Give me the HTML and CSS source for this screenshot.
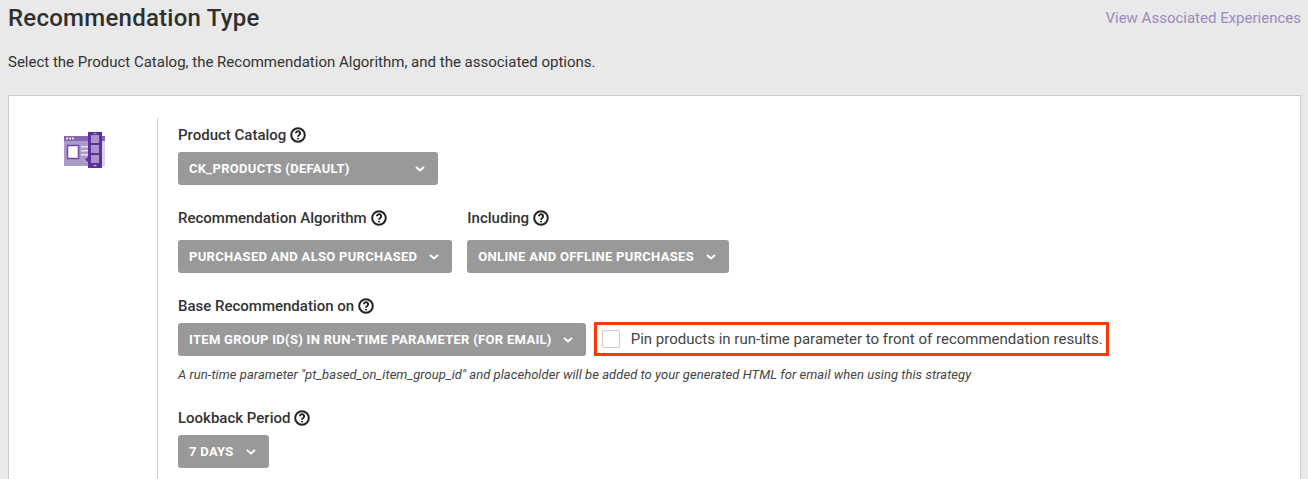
FILE: index.html
```html
<!DOCTYPE html>
<html>
<head>
  <title>Recommendation Type</title>
  <link rel="stylesheet" href="styles.css">
</head>
<body>
  <div class="header">
    <h1>Recommendation Type</h1>
    <a class="link" href="#">View Associated Experiences</a>
  </div>
  <p class="intro">Select the Product Catalog, the Recommendation Algorithm, and the associated options.</p>

  <div class="card">
    <div class="icon-col">
      <svg width="41" height="36" viewBox="0 0 41 36">
        <rect x="0" y="4" width="41" height="30" fill="#ab9bc9"/>
        <rect x="0" y="4" width="41" height="5" fill="#8568b2"/>
        <rect x="2" y="5.500" width="2" height="2" fill="#e6e0f0"/>
        <rect x="5" y="5.500" width="2" height="2" fill="#e6e0f0"/>
        <rect x="8" y="5.500" width="2" height="2" fill="#e6e0f0"/>
        <rect x="38" y="9" width="3" height="25" fill="#d9d2e8"/>
        <rect x="3.500" y="13.500" width="11" height="13" fill="#fff" stroke="#6f4aa5" stroke-width="1.500"/>
        <rect x="17" y="14" width="7" height="1.500" fill="#e6e0f0"/>
        <rect x="17" y="18" width="7" height="1.500" fill="#e6e0f0"/>
        <rect x="17" y="22" width="7" height="1.500" fill="#e6e0f0"/>
        <rect x="24" y="0" width="14" height="36" fill="#5f2f9e"/>
        <rect x="27" y="3" width="8" height="8" fill="#a795c7"/>
        <rect x="27" y="13" width="8" height="8" fill="#a795c7"/>
        <rect x="27" y="23" width="8" height="8" fill="#a795c7"/>
        <path d="M29 2l2-1 2 1z" fill="#c9bfe0"/>
        <path d="M29 33l2 1.500 2-1.500z" fill="#c9bfe0"/>
        <path d="M24 25l-3 2.500 3 2.500z" fill="#5f2f9e"/>
      </svg>
    </div>
    <div class="form-col">
      <div class="field">
        <label class="label">Product Catalog
          <svg class="help" viewBox="0 0 16 16"><circle cx="8" cy="8" r="6.800"/><path d="M5.900 6.300a2.100 2.100 0 1 1 3.300 1.700c-.8.5-1.200.9-1.200 1.800"/><path d="M8 11v1.300"/></svg>
        </label>
        <div class="select catalog">CK_PRODUCTS (DEFAULT)
          <svg class="chevron" viewBox="0 0 10 6"><path d="M1 1l4 3.500L9 1"/></svg>
        </div>
      </div>

      <div class="row">
        <div class="field">
          <label class="label spaced">Recommendation Algorithm
            <svg class="help" viewBox="0 0 16 16"><circle cx="8" cy="8" r="6.800"/><path d="M5.900 6.300a2.100 2.100 0 1 1 3.300 1.700c-.8.5-1.200.9-1.200 1.800"/><path d="M8 11v1.300"/></svg>
          </label>
          <div class="select">PURCHASED AND ALSO PURCHASED
            <svg class="chevron" viewBox="0 0 10 6"><path d="M1 1l4 3.500L9 1"/></svg>
          </div>
        </div>
        <div class="field">
          <label class="label spaced">Including
            <svg class="help" viewBox="0 0 16 16"><circle cx="8" cy="8" r="6.800"/><path d="M5.900 6.300a2.100 2.100 0 1 1 3.300 1.700c-.8.5-1.200.9-1.200 1.800"/><path d="M8 11v1.300"/></svg>
          </label>
          <div class="select">ONLINE AND OFFLINE PURCHASES
            <svg class="chevron" viewBox="0 0 10 6"><path d="M1 1l4 3.500L9 1"/></svg>
          </div>
        </div>
      </div>

      <div class="field tight">
        <label class="label close">Base Recommendation on
          <svg class="help" viewBox="0 0 16 16"><circle cx="8" cy="8" r="6.800"/><path d="M5.900 6.300a2.100 2.100 0 1 1 3.300 1.700c-.8.5-1.200.9-1.200 1.800"/><path d="M8 11v1.300"/></svg>
        </label>
        <div class="base-row">
          <div class="select">ITEM GROUP ID(S) IN RUN-TIME PARAMETER (FOR EMAIL)
            <svg class="chevron" viewBox="0 0 10 6"><path d="M1 1l4 3.500L9 1"/></svg>
          </div>
          <div class="pin-box">
            <span class="checkbox"></span>
            <span>Pin products in run-time parameter to front of recommendation results.</span>
          </div>
        </div>
        <p class="note">A run-time parameter "pt_based_on_item_group_id" and placeholder will be added to your generated HTML for email when using this strategy</p>
      </div>

      <div class="field last">
        <label class="label">Lookback Period
          <svg class="help" viewBox="0 0 16 16"><circle cx="8" cy="8" r="6.800"/><path d="M5.900 6.300a2.100 2.100 0 1 1 3.300 1.700c-.8.5-1.200.9-1.200 1.800"/><path d="M8 11v1.300"/></svg>
        </label>
        <div class="select">7 DAYS
          <svg class="chevron" viewBox="0 0 10 6"><path d="M1 1l4 3.500L9 1"/></svg>
        </div>
      </div>
    </div>
  </div>
</body>
</html>
```

FILE: styles.css
```css
html, body {
  height: 479px;
  overflow: hidden;
}

body {
  font-family: Roboto, Arial, sans-serif;
  background-color: #e9e9e9;
  color: #333;
  margin: 0;
  padding: 0 7px 0 8px;
  box-sizing: border-box;
}

.header {
  display: flex;
  justify-content: space-between;
  align-items: flex-start;
  padding-top: 4px;
}

h1 {
  font-size: 24px;
  font-weight: 500;
  line-height: 28px;
  letter-spacing: 0.25px;
  margin: 0;
  color: #2f2f2f;
}

.link {
  color: #9b89c4;
  font-size: 15px;
  line-height: 20px;
  text-decoration: none;
  margin-top: 4px;
}

.intro {
  font-size: 15px;
  line-height: 20px;
  margin: 19px 0 24px 0;
  padding-top: 1px;
  height: 19px;
}

.card {
  display: flex;
  background-color: #fff;
  border: 1px solid #ccc;
  border-bottom: none;
  height: 384px;
  box-sizing: border-box;
}

.icon-col {
  width: 149px;
  flex-shrink: 0;
  border-right: 1px solid #ccc;
  margin-top: 22px;
  padding: 14px 0 0 55px;
  box-sizing: border-box;
}

.form-col {
  padding: 30px 0 0 20px;
}

.field {
  margin-bottom: 24px;
}

.field.tight {
  margin-bottom: 26px;
}

.field.last {
  margin-bottom: 0;
}

.row {
  display: flex;
  gap: 15px;
}

.label {
  display: flex;
  align-items: center;
  gap: 4px;
  font-size: 15px;
  font-weight: 500;
  line-height: 18px;
  margin-bottom: 8px;
  color: #333;
}

.label.spaced {
  margin-bottom: 13px;
}

.label.close {
  margin-bottom: 7px;
}

.help {
  width: 16px;
  height: 16px;
  fill: none;
  stroke: #222;
  stroke-width: 2;
}

.select {
  display: inline-flex;
  align-items: center;
  justify-content: space-between;
  gap: 12px;
  height: 33px;
  padding: 0 13px 0 11px;
  box-sizing: border-box;
  background-color: #999;
  border-radius: 3px;
  color: #fff;
  font-size: 13px;
  font-weight: 700;
  letter-spacing: 0.3px;
  white-space: nowrap;
}

.select.catalog {
  width: 260px;
}

.chevron {
  width: 10px;
  height: 6px;
  fill: none;
  stroke: #fff;
  stroke-width: 2;
}

.base-row {
  display: flex;
  align-items: flex-end;
  gap: 8px;
}

.base-row .select {
  gap: 11px;
}

.pin-box {
  display: flex;
  align-items: center;
  gap: 11px;
  height: 34px;
  padding: 0 3px 0 5px;
  box-sizing: border-box;
  border: 3px solid #f93a0b;
  font-size: 15px;
  color: #444;
}

.checkbox {
  width: 18px;
  height: 18px;
  border: 1px solid #ccc;
  border-radius: 2px;
  box-sizing: border-box;
}

.note {
  font-size: 13px;
  font-style: italic;
  line-height: 16px;
  letter-spacing: 0.05px;
  margin: 11px 0 0 0;
  color: #444;
}
```
